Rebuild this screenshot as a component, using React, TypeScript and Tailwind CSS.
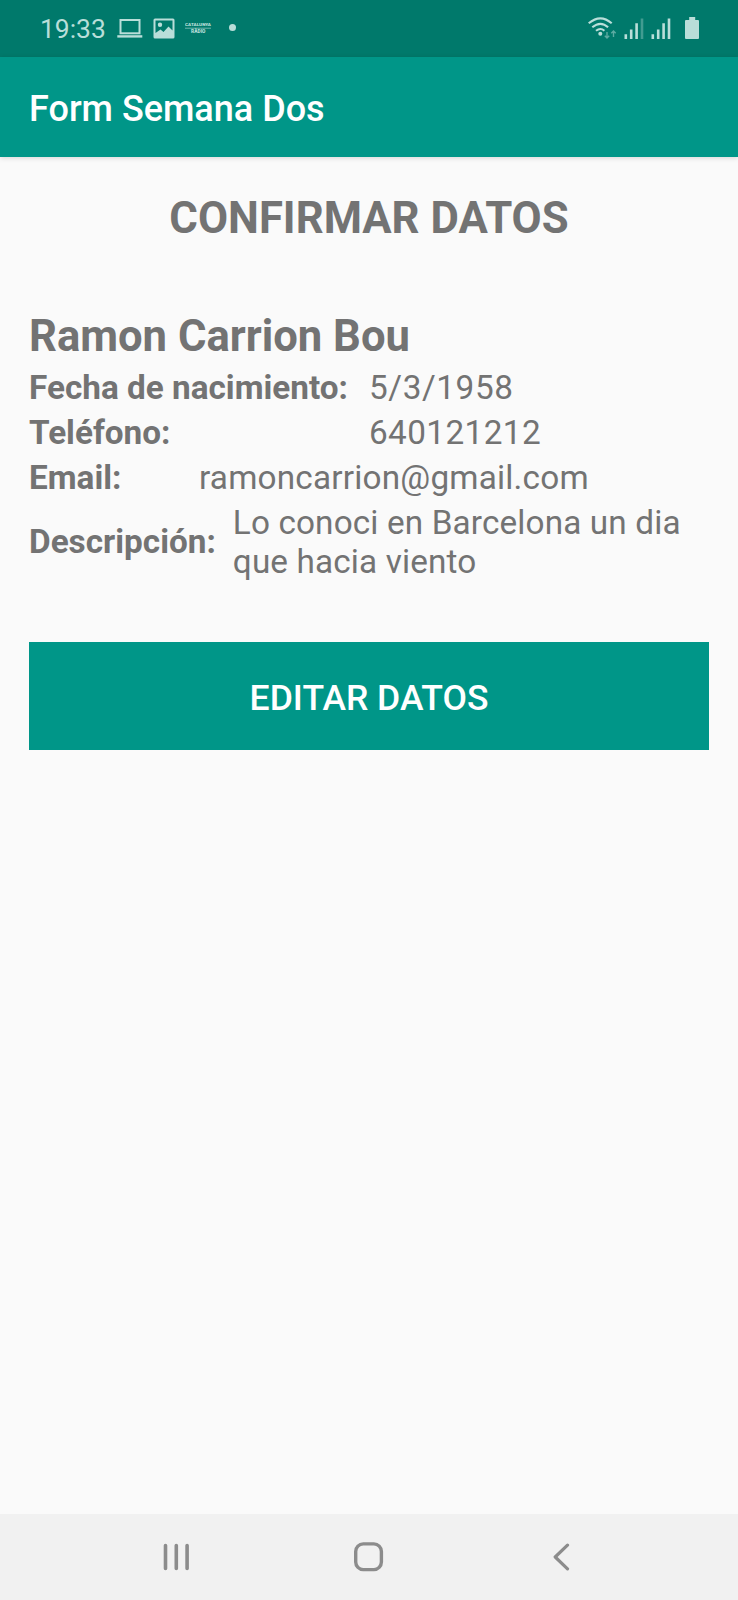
import type { ReactNode } from "react";

function StatusBar() {
  return (
    <header className="flex h-[57px] items-center bg-[#00796b] pl-[40px] pr-[38px] text-[#b9ded9]">
      <span className="w-[66px] text-[26.4px] leading-[30px]">19:33</span>
      <svg className="ml-[11px] h-[22px] w-[26px]" viewBox="0 0 26 22" fill="none" stroke="currentColor">
        <rect x="3.5" y="2" width="19" height="13.3" strokeWidth="2" />
        <path d="M0.3 18.4H25.3" strokeWidth="2.4" />
      </svg>
      <svg className="ml-[10px] h-[22px] w-[22px]" viewBox="0 0 22 22">
        <path
          fill="currentColor"
          fillRule="evenodd"
          d="M2 .5H20Q21.5 .5 21.5 2V19Q21.5 20.5 20 20.5H2Q.5 20.5 .5 19V2Q.5 .5 2 .5ZM2.5 2.5V15L7.5 11.5L10.5 14L15.5 8.5L19.5 12.5V2.5ZM7 4.5A2.2 2.2 0 1 0 7 8.9A2.2 2.2 0 1 0 7 4.5Z"
        />
      </svg>
      <svg className="ml-[10px] h-[14px] w-[27px]" viewBox="0 0 27 14" fill="currentColor">
        <text x="0" y="4.3" textLength="26" lengthAdjust="spacingAndGlyphs" className="text-[4.4px] font-black">CATALUNYA</text>
        <path d="M0 6.2H26" stroke="currentColor" strokeWidth=".6" />
        <text x="6" y="11.4" textLength="14.5" lengthAdjust="spacingAndGlyphs" className="text-[4.6px] font-black">RÀDIO</text>
      </svg>
      <span className="ml-[17px] mb-[2px] h-[7px] w-[7px] rounded-full bg-current" />

      <svg className="ml-auto h-[24px] w-[29px]" viewBox="0 0 29 24" fill="none" stroke="currentColor">
        <path d="M.7 6.3Q12.5-3.7 23.7 6.3M4.3 10.3Q12.5 3.3 20.1 10.3M8 13.8Q12.5 10.2 16.4 13.8" strokeWidth="2.1" />
        <circle cx="12.3" cy="16.8" r="2" fill="currentColor" stroke="none" />
        <path d="M19 15V21M16.8 18.8L19 21L21.2 18.8M25.5 20V14M23.3 16.2L25.5 14L27.7 16.2" strokeWidth="1.4" opacity=".5" />
      </svg>
      <svg className="ml-[7px] h-[22px] w-[20px]" viewBox="0 0 20 22" stroke="currentColor" strokeWidth="2.6">
        <path d="M1.8 16.3V21M7.2 11.5V21M12.6 5.3V21" />
        <path d="M18 .5V21" opacity=".35" />
      </svg>
      <svg className="ml-[7px] h-[22px] w-[20px]" viewBox="0 0 20 22" stroke="currentColor" strokeWidth="2.6">
        <path d="M1.8 16.3V21M7.2 11.5V21M12.6 5.3V21M18 .5V21" />
      </svg>
      <svg className="ml-[14px] h-[23px] w-[15px]" viewBox="0 0 15 23" fill="currentColor">
        <path d="M4.2 0H10.2V3H13Q14 3 14 4V21Q14 22 13 22H1Q0 22 0 21V4Q0 3 1 3H4.2Z" />
      </svg>
    </header>
  );
}

function Label({ children }: { children: ReactNode }) {
  return <dt className="shrink-0 whitespace-nowrap font-bold">{children}</dt>;
}

function NavigationBar() {
  return (
    <nav className="flex h-[86px] items-center bg-[#f1f1f1] pl-[163px] pr-[168px] text-[#8c8c8c]">
      <svg className="h-[28px] w-[27px]" viewBox="0 0 27 28" stroke="currentColor" strokeWidth="3.6" strokeLinecap="round">
        <path d="M2.5 2.5V25.5M13.3 2.5V25.5M24.1 2.5V25.5" />
      </svg>
      <svg className="ml-[164px] h-[30px] w-[30px]" viewBox="0 0 30 30" fill="none" stroke="currentColor" strokeWidth="3.4">
        <rect x="1.7" y="1.9" width="25.7" height="25.7" rx="7.5" />
      </svg>
      <svg className="ml-auto h-[28px] w-[17px]" viewBox="0 0 17 28" fill="none" stroke="currentColor" strokeWidth="3.2" strokeLinecap="round" strokeLinejoin="round">
        <path d="M14.5 2.2L2.2 14L14.5 25.8" />
      </svg>
    </nav>
  );
}

export default function App() {
  return (
    <div className="flex h-[1600px] w-[738px] flex-col bg-[#fafafa] font-['Roboto',sans-serif] text-[#737373]">
      <StatusBar />
      <div className="z-10 flex h-[100px] items-center bg-[#009688] pl-[29px] pt-[4px] shadow-[0_1px_5px_rgba(0,0,0,0.15)]">
        <h1 className="text-[36px] font-medium leading-[42px] text-white">Form Semana Dos</h1>
      </div>
      <main className="flex flex-1 flex-col px-[29px] pt-[36px]">
        <h2 className="text-center text-[43.7px] font-bold leading-[50px]">CONFIRMAR DATOS</h2>
        <h3 className="mt-[69px] text-[43.6px] font-bold leading-[50px]">Ramon Carrion Bou</h3>
        <dl className="mt-[7px] flex flex-col gap-[7px] text-[33.3px] leading-[38px]">
          <div className="grid grid-cols-2">
            <Label>Fecha de nacimiento:</Label>
            <dd className="tracking-[0.6px]">5/3/1958</dd>
          </div>
          <div className="grid grid-cols-2">
            <Label>Teléfono:</Label>
            <dd className="tracking-[0.4px]">640121212</dd>
          </div>
          <div className="grid grid-cols-4">
            <Label>Email:</Label>
            <dd className="col-span-3 tracking-[0.2px]">ramoncarrion@gmail.com</dd>
          </div>
          <div className="-mt-px flex items-start">
            <div className="pt-[20px]">
              <Label>Descripción:</Label>
            </div>
            <dd className="ml-[17px] flex-1 leading-[39px] tracking-[0.14px]">Lo conoci en Barcelona un dia que hacia viento</dd>
          </div>
        </dl>
        <button className="mt-[61px] h-[108px] bg-[#009688] pt-[3px] text-[35.5px] font-medium leading-[42px] text-white">
          EDITAR DATOS
        </button>
      </main>
      <NavigationBar />
    </div>
  );
}
